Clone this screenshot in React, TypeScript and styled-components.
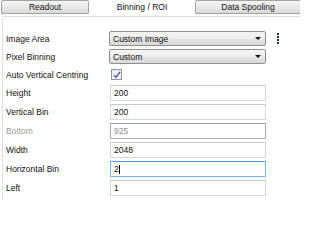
import * as React from 'react';
import styled, { createGlobalStyle, css } from 'styled-components';

const GlobalStyle = createGlobalStyle`
  html, body {
    margin: 0;
    padding: 0;
    background: #ffffff;
  }
  body {
    width: 300px;
    height: 200px;
    overflow: hidden;
    font-family: 'Liberation Sans', Arial, sans-serif;
    font-size: 8.5px;
    color: #111;
  }
`;

const Wrapper = styled.div`
  width: 300px;
  height: 200px;
  overflow: hidden;
  background: #ffffff;
`;

const TabStrip = styled.div`
  display: flex;
  height: 14px;
  padding-left: 1px;
`;

const Tab = styled.div<{ $active?: boolean; $width: number }>`
  box-sizing: border-box;
  width: ${({ $width }) => $width}px;
  flex: none;
  display: flex;
  align-items: center;
  justify-content: center;
  height: 14px;
  font-size: 8.5px;
  color: #111;
  ${({ $active }) =>
    $active
      ? css`
          background: #ffffff;
        `
      : css`
          border: 1px solid #a3a3a3;
          border-radius: 2px 2px 0 0;
          background: linear-gradient(#f7f7f7, #e8e8e8 55%, #d9d9d9);
        `}
`;

const Panel = styled.div`
  box-sizing: border-box;
  margin: 2px 0 0 2px;
  height: 200px;
  border-top: 1px solid #dcdfe3;
  border-left: 1px solid #dcdfe3;
  border-top-left-radius: 3px;
  padding: 14px 0 0 3px;
`;

const Form = styled.div`
  display: grid;
  grid-template-columns: 104px 156px 1fr;
  row-gap: 3px;
  align-items: center;
`;

const Label = styled.div<{ $disabled?: boolean }>`
  font-size: 8.5px;
  color: ${({ $disabled }) => ($disabled ? '#9a9a9a' : '#111')};
  white-space: nowrap;
`;

const Combo = styled.div`
  box-sizing: border-box;
  margin-left: -1px;
  width: 157px;
  height: 15px;
  display: flex;
  align-items: center;
  justify-content: space-between;
  padding: 0 4px 0 3px;
  border: 1px solid #8e8f8f;
  border-radius: 2px;
  background: linear-gradient(#f4f4f4, #eeeeee 50%, #e4e4e4 51%, #dadada);
  font-size: 8.5px;
  color: #111;
`;

const Arrow = styled.span`
  width: 0;
  height: 0;
  border-left: 3px solid transparent;
  border-right: 3px solid transparent;
  border-top: 3px solid #111;
`;

const Kebab = styled.div`
  display: flex;
  flex-direction: column;
  gap: 1px;
  margin-left: 11px;
  span {
    width: 2px;
    height: 2px;
    background: #1e2c44;
  }
`;

const CheckCell = styled.div`
  height: 15px;
  display: flex;
  align-items: center;
`;

const Check = styled.div`
  box-sizing: border-box;
  width: 11px;
  height: 11px;
  margin-left: 1px;
  border: 1px solid #8a96a4;
  background: linear-gradient(#e9ecef, #ffffff);
  display: flex;
  align-items: center;
  justify-content: center;
`;

const Field = styled.div<{ $state?: 'disabled' | 'focus' }>`
  box-sizing: border-box;
  width: 156px;
  height: 16px;
  display: flex;
  align-items: center;
  padding-left: 3px;
  background: #ffffff;
  font-size: 8.5px;
  color: ${({ $state }) => ($state === 'disabled' ? '#8c8c8c' : '#111')};
  border: 1px solid
    ${({ $state }) =>
      $state === 'disabled' ? '#adadad' : $state === 'focus' ? '#7eb4ea' : '#d3d6db'};
  border-top-color: ${({ $state }) =>
    $state === 'disabled' ? '#a0a0a0' : $state === 'focus' ? '#569de5' : '#c6c9ce'};
`;

const Caret = styled.span`
  display: inline-block;
  width: 1px;
  height: 9px;
  background: #000;
  margin-left: 0.5px;
`;

const fields: { label: string; value: string; state?: 'disabled' | 'focus' }[] = [
  { label: 'Height', value: '200' },
  { label: 'Vertical Bin', value: '200' },
  { label: 'Bottom', value: '925', state: 'disabled' },
  { label: 'Width', value: '2048' },
  { label: 'Horizontal Bin', value: '2', state: 'focus' },
  { label: 'Left', value: '1' },
];

export default function App() {
  return (
    <Wrapper>
      <GlobalStyle />
      <TabStrip>
        <Tab $width={88}>Readout</Tab>
        <Tab $width={106} $active>
          Binning / ROI
        </Tab>
        <Tab $width={106}>Data Spooling</Tab>
      </TabStrip>
      <Panel>
        <Form>
          <Label>Image Area</Label>
          <Combo>
            Custom Image
            <Arrow />
          </Combo>
          <Kebab>
            <span />
            <span />
            <span />
            <span />
          </Kebab>

          <Label>Pixel Binning</Label>
          <Combo>
            Custom
            <Arrow />
          </Combo>
          <div />

          <Label>Auto Vertical Centring</Label>
          <CheckCell>
            <Check>
              <svg width="8" height="8" viewBox="0 0 8 8">
                <path d="M1 4.2 L3 6.5 L7 0.8" fill="none" stroke="#2b4fa8" strokeWidth="1.2" />
              </svg>
            </Check>
          </CheckCell>
          <div />

          {fields.map((f) => (
            <React.Fragment key={f.label}>
              <Label $disabled={f.state === 'disabled'}>{f.label}</Label>
              <Field $state={f.state}>
                {f.value}
                {f.state === 'focus' && <Caret />}
              </Field>
              <div />
            </React.Fragment>
          ))}
        </Form>
      </Panel>
    </Wrapper>
  );
}
